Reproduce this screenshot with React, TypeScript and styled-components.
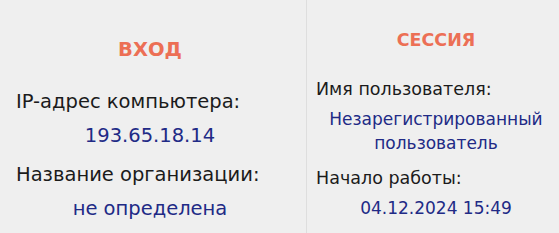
import React from "react";
import styled, { createGlobalStyle } from "styled-components";

const GlobalStyle = createGlobalStyle`
  html, body {
    margin: 0;
    padding: 0;
    background: #efefef;
  }
  body {
    font-family: "DejaVu Sans", Verdana, sans-serif;
  }
`;

const Board = styled.div`
  display: flex;
  width: 559px;
  height: 233px;
  background: #efefef;
`;

const Column = styled.div<{
  $width: number;
  $size: number;
  $line: number;
  $pad: string;
  $gap: number;
  $inner: number;
}>`
  display: flex;
  flex-direction: column;
  box-sizing: border-box;
  width: ${(p) => p.$width}px;
  padding: ${(p) => p.$pad};
  gap: ${(p) => p.$gap}px;
  font-size: ${(p) => p.$size}px;
  line-height: ${(p) => p.$line}px;
  --inner-gap: ${(p) => p.$inner}px;
`;

const Divider = styled.div`
  width: 1px;
  align-self: stretch;
  background: #dedede;
`;

const Title = styled.div<{ $after: number }>`
  text-align: center;
  font-weight: bold;
  color: #ec6f55;
  margin-bottom: ${(p) => p.$after}px;
`;

const Field = styled.div`
  display: flex;
  flex-direction: column;
  gap: var(--inner-gap);
`;

const Label = styled.div`
  color: #1b1b1b;
`;

const Value = styled.div<{ $size?: number }>`
  text-align: center;
  color: #212a86;
  ${(p) => (p.$size ? `font-size: ${p.$size}px;` : "")}
`;

export default function App() {
  return (
    <>
      <GlobalStyle />
      <Board>
        <Column $width={306} $size={19.5} $line={26} $pad="37px 22px 0 16px" $gap={13} $inner={8}>
          <Title $after={13}>ВХОД</Title>
          <Field>
            <Label>IP-адрес компьютера:</Label>
            <Value>193.65.18.14</Value>
          </Field>
          <Field>
            <Label>Название организации:</Label>
            <Value>не определена</Value>
          </Field>
        </Column>
        <Divider />
        <Column $width={252} $size={17.5} $line={24} $pad="28px 3px 0 9px" $gap={11} $inner={6}>
          <Title $after={14}>СЕССИЯ</Title>
          <Field>
            <Label>Имя пользователя:</Label>
            <Value $size={17}>
              Незарегистрированный
              <br />
              пользователь
            </Value>
          </Field>
          <Field>
            <Label>Начало работы:</Label>
            <Value $size={17}>04.12.2024 15:49</Value>
          </Field>
        </Column>
      </Board>
    </>
  );
}
